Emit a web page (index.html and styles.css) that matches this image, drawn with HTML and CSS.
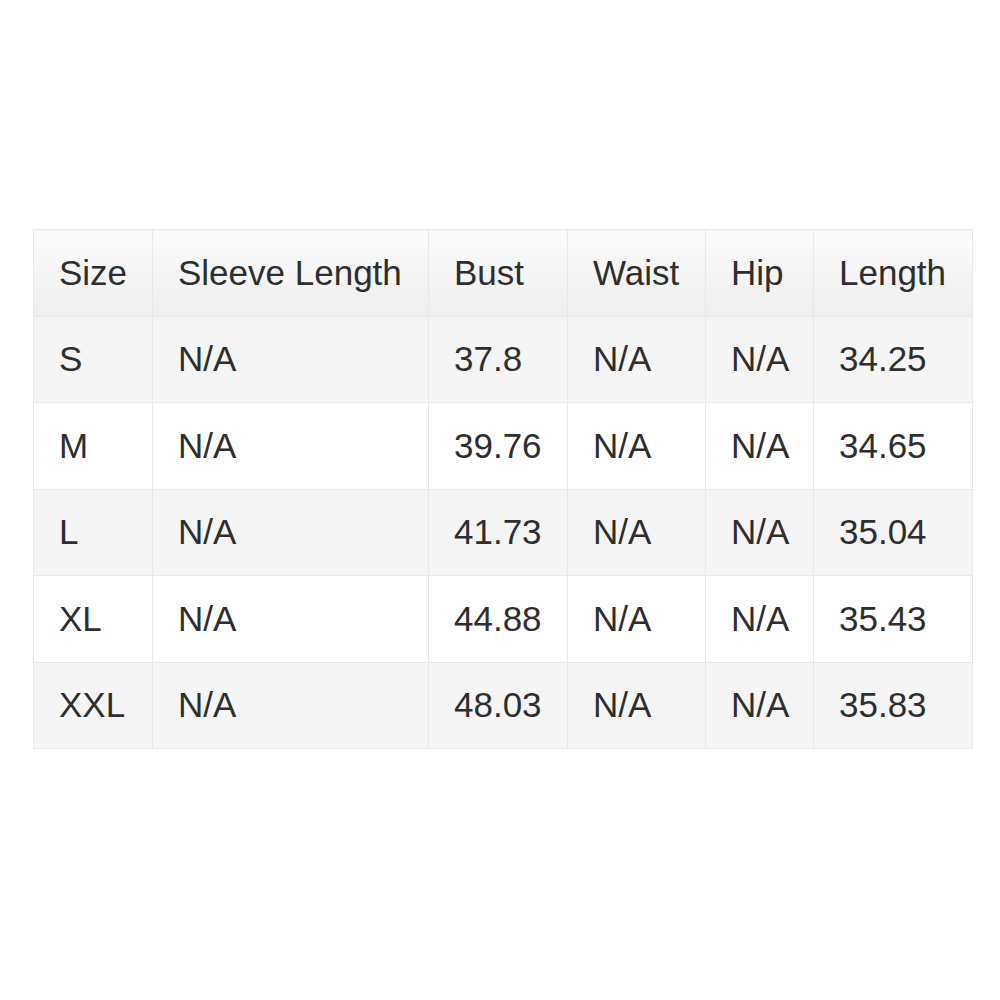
FILE: index.html
```html
<!DOCTYPE html>
<html>
<head>
<meta charset="utf-8">
<link rel="stylesheet" href="styles.css">
</head>
<body>
<div class="page">
  <table class="size-table">
    <colgroup>
      <col class="c1"><col class="c2"><col class="c3"><col class="c4"><col class="c5"><col class="c6">
    </colgroup>
    <thead>
      <tr><th>Size</th><th>Sleeve Length</th><th>Bust</th><th>Waist</th><th>Hip</th><th>Length</th></tr>
    </thead>
    <tbody>
      <tr class="odd"><td>S</td><td>N/A</td><td>37.8</td><td>N/A</td><td>N/A</td><td>34.25</td></tr>
      <tr><td>M</td><td>N/A</td><td>39.76</td><td>N/A</td><td>N/A</td><td>34.65</td></tr>
      <tr class="odd"><td>L</td><td>N/A</td><td>41.73</td><td>N/A</td><td>N/A</td><td>35.04</td></tr>
      <tr><td>XL</td><td>N/A</td><td>44.88</td><td>N/A</td><td>N/A</td><td>35.43</td></tr>
      <tr class="odd"><td>XXL</td><td>N/A</td><td>48.03</td><td>N/A</td><td>N/A</td><td>35.83</td></tr>
    </tbody>
  </table>
</div>
</body>
</html>
```

FILE: styles.css
```css
html, body {
  margin: 0;
  padding: 0;
  background: #ffffff;
}
.page {
  padding: 229px 0 0 33px;
}
.size-table {
  border-collapse: collapse;
  table-layout: fixed;
  width: 939px;
  font-family: "Liberation Sans", Arial, sans-serif;
  font-size: 35px;
  color: #2e2e2e;
}
.c1 { width: 119px; }
.c2 { width: 276px; }
.c3 { width: 139px; }
.c4 { width: 138px; }
.c5 { width: 108px; }
.c6 { width: 159px; }
.size-table th,
.size-table td {
  border: 1px solid #e8e8e8;
  padding: 0 0 0 25px;
  height: 85.5px;
  text-align: left;
  font-weight: normal;
  vertical-align: middle;
  white-space: nowrap;
}
.size-table th {
  background: linear-gradient(to bottom, #fbfbfb, #efefef);
}
.size-table tr.odd td {
  background: #f5f5f5;
}
```
